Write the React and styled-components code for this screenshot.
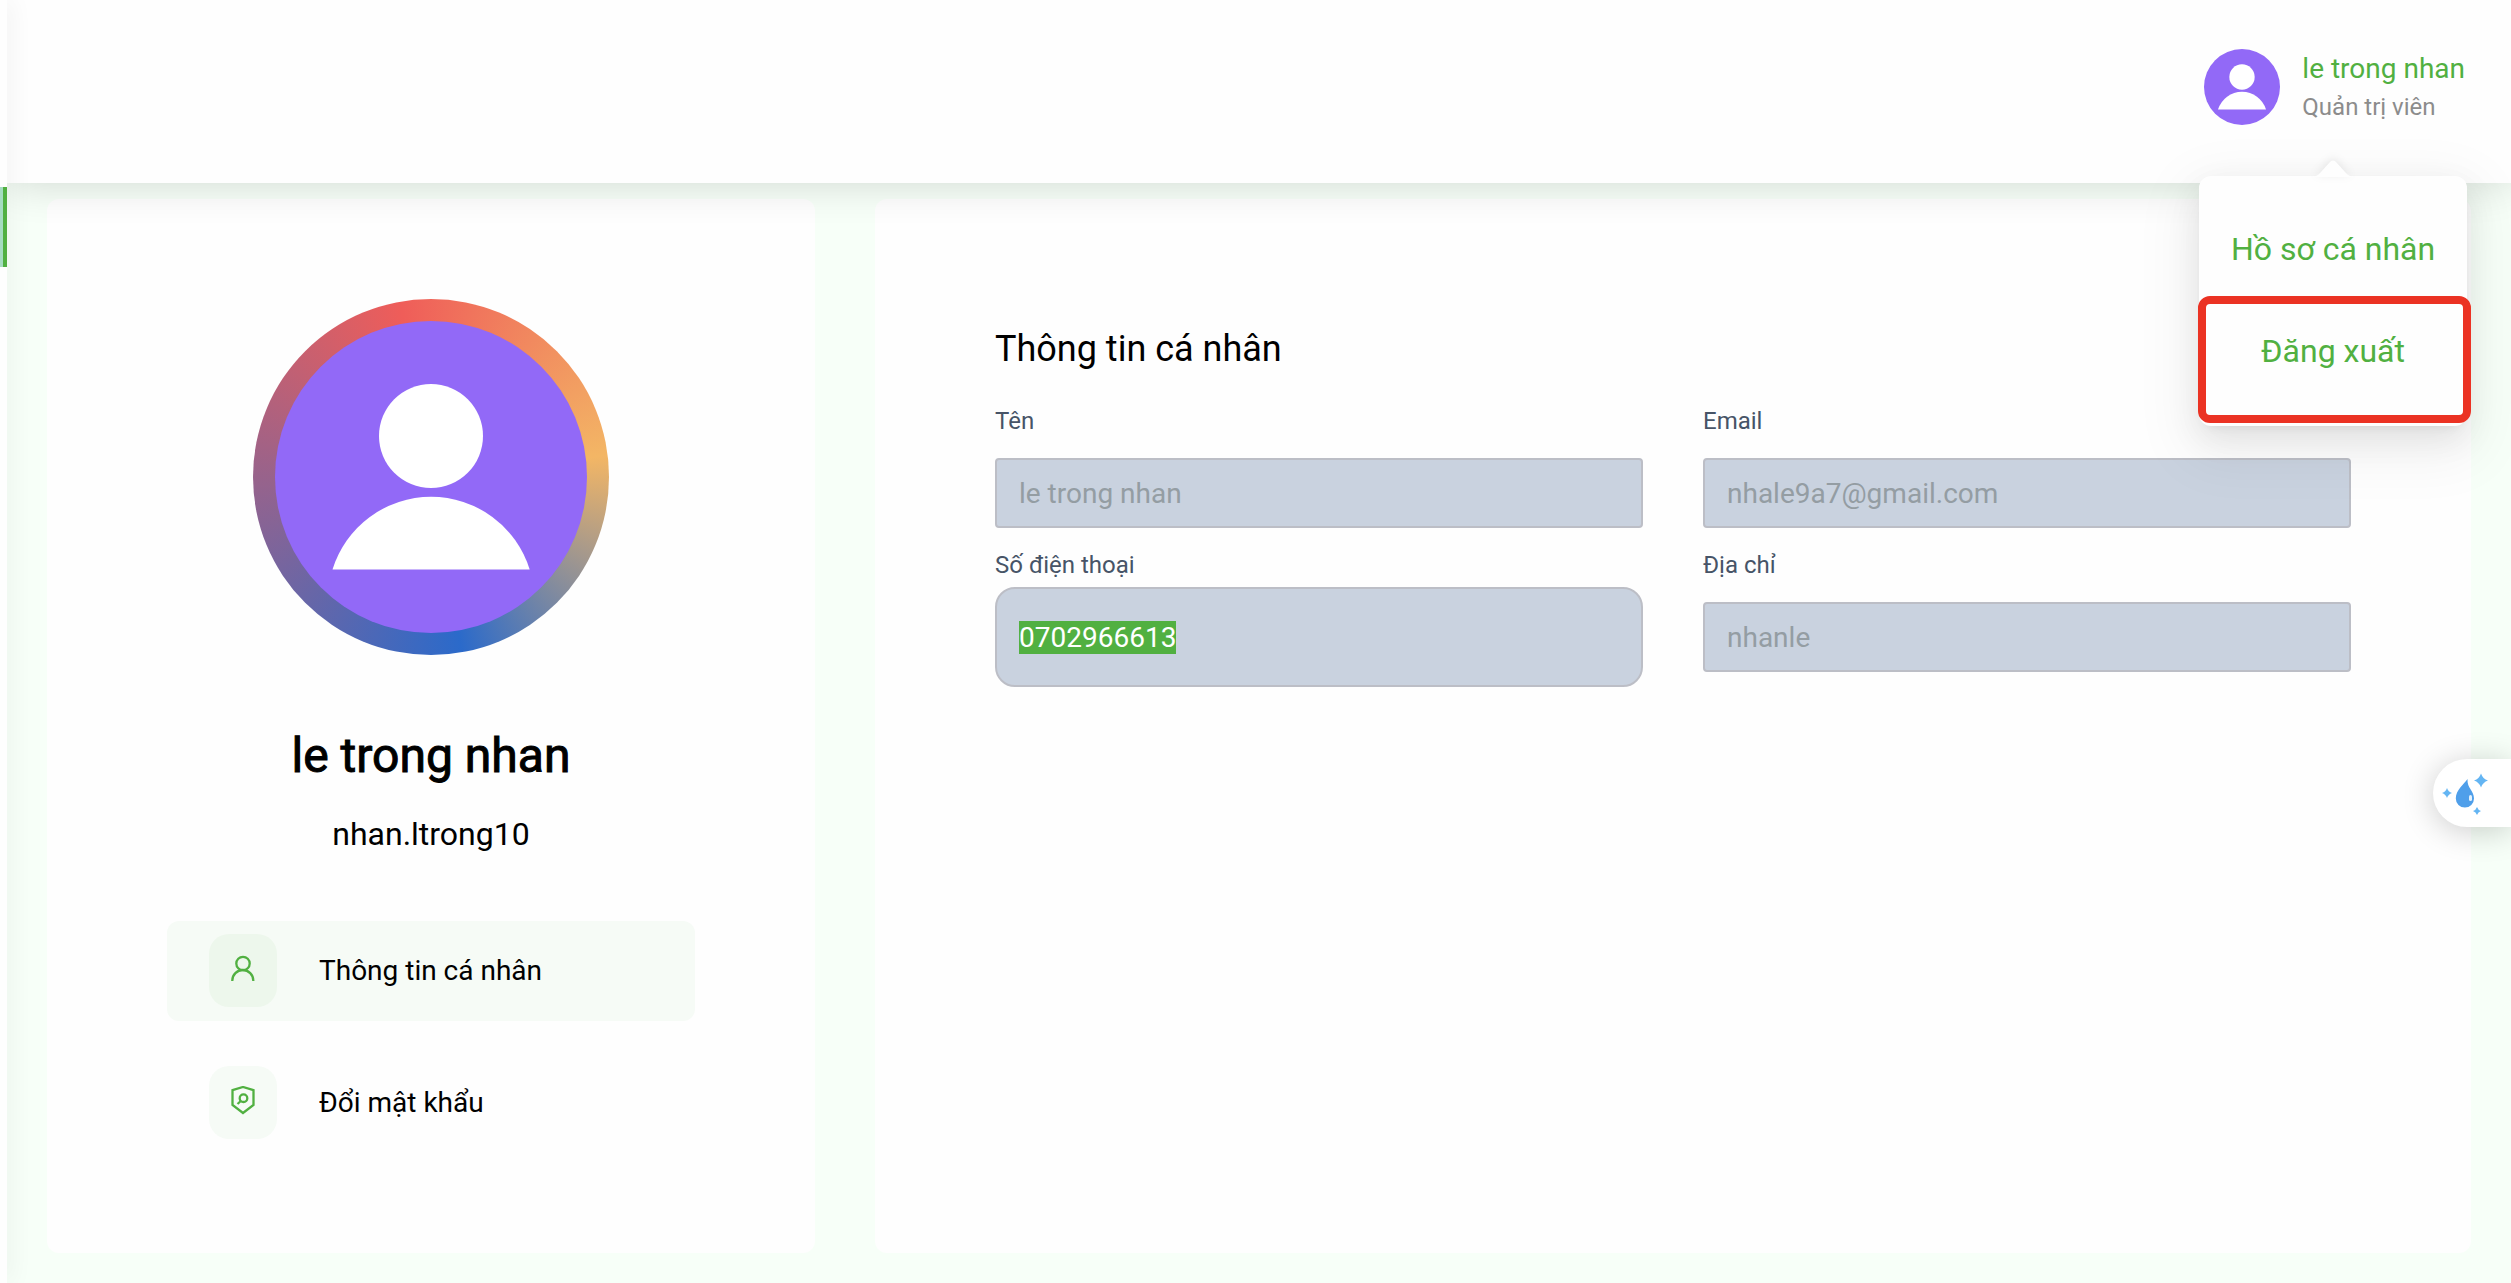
import React, { useEffect, useRef } from "react";
import styled, { createGlobalStyle, css } from "styled-components";

const GlobalStyle = createGlobalStyle`
  *, *::before, *::after { box-sizing: border-box; }
  body {
    margin: 0;
    background: #f7fff8;
    color: #000;
    font-family: Roboto, "Noto Sans", sans-serif;
    font-size: 28px;
  }
  h1, h2, p, ul { margin: 0; padding: 0; font-weight: 400; }
  ul { list-style: none; }
`;

const Shell = styled.div`
  display: grid;
  grid-template-columns: 7px 1fr;
  min-height: 100vh;
  overflow: hidden;
`;

const Rail = styled.nav`
  position: relative;
  z-index: 3;
  padding-top: 187px;
  background: #fefefe;
  box-shadow: 0 0 24px rgba(0, 0, 0, 0.12);
`;

const RailMarker = styled.a`
  display: block;
  height: 80px;
  background: #a5dcc0;
  border-right: 4px solid #51b041;
`;

const Page = styled.div`
  display: flex;
  flex-direction: column;
  min-width: 0;
`;

const Header = styled.header`
  position: relative;
  z-index: 2;
  display: flex;
  justify-content: flex-end;
  height: 183px;
  padding: 49px 46px 0 0;
  background: #fefefe;
  box-shadow: 0 0 40px rgba(0, 0, 0, 0.16);
`;

const Account = styled.div`
  position: relative;
  display: flex;
  align-items: flex-start;
  gap: 22px;
  height: 76px;
`;

const AvatarSvg = styled.svg`
  display: block;
  flex: none;
  width: ${(p) => p.$size}px;
  height: ${(p) => p.$size}px;
  border-radius: 50%;
`;

const AccountName = styled.p`
  font-size: 28px;
  line-height: 40px;
  color: #51b041;
`;

const AccountRole = styled.p`
  font-size: 24px;
  line-height: 36px;
  color: #8c8c8c;
`;

const Menu = styled.ul`
  position: absolute;
  top: 127px;
  right: -2px;
  width: 268px;
  height: 250px;
  padding-top: 22px;
  border-radius: 12px;
  background: #fefefe;
  box-shadow: 0 12px 32px rgba(0, 0, 0, 0.08), 0 6px 12px -8px rgba(0, 0, 0, 0.12),
    0 18px 56px 16px rgba(0, 0, 0, 0.05);
`;

const MenuArrow = styled.svg`
  position: absolute;
  top: -16px;
  left: 114px;
  width: 40px;
  height: 17px;
  filter: drop-shadow(0 -2px 4px rgba(0, 0, 0, 0.08));
`;

const MenuItem = styled.li`
  height: 102px;
`;

const MenuButton = styled.button`
  width: 100%;
  height: 100%;
  border: 0;
  padding: 0;
  background: none;
  font: inherit;
  font-size: 32px;
  color: #51b041;
`;

const Highlight = styled.li`
  position: absolute;
  top: 120px;
  left: -1px;
  right: -4px;
  height: 127px;
  border: 8px solid #eb3223;
  border-radius: 12px;
  pointer-events: none;
`;

const Content = styled.main`
  flex: 1;
  display: grid;
  grid-template-columns: repeat(3, minmax(0, 1fr));
  gap: 60px;
  padding: 16px 40px 30px;
`;

const Card = styled.section`
  background: #fefefe;
  border-radius: 12px;
`;

const ProfileCard = styled(Card)`
  display: flex;
  flex-direction: column;
  align-items: center;
  padding: 100px 120px 40px;
`;

const InfoCard = styled(Card)`
  grid-column: span 2;
  padding: 120px;
`;

const Ring = styled.div`
  padding: 22px;
  border-radius: 50%;
  background: conic-gradient(from -10deg, #ef5d59, #f3b665 93deg, #2b6aca 180deg, #ef5d59);
`;

const FullName = styled.h1`
  margin-top: 71px;
  font-size: 48px;
  line-height: 60px;
  -webkit-text-stroke: 1px currentColor;
`;

const UserName = styled.p`
  margin-top: 28px;
  font-size: 32px;
  line-height: 40px;
`;

const Tabs = styled.div`
  align-self: stretch;
  display: flex;
  flex-direction: column;
  gap: 32px;
  margin-top: 67px;
`;

const Tab = styled.button`
  display: flex;
  align-items: center;
  gap: 42px;
  height: 100px;
  padding: 0 42px 2px;
  border: 0;
  border-radius: 12px;
  background: ${(p) => (p.$active ? "#f6fbf6" : "transparent")};
  color: #000;
  font: inherit;
  font-size: 28px;
  text-align: left;
`;

const TabIcon = styled.span`
  display: flex;
  justify-content: center;
  width: 68px;
  height: 73px;
  padding-top: 20px;
  border-radius: 20px;
  background: ${(p) => (p.$active ? "#edf7ec" : "#f6fbf6")};
`;

const Title = styled.h2`
  font-size: 36px;
  line-height: 60px;
  margin-bottom: 20px;
`;

const Form = styled.form`
  display: grid;
  grid-template-columns: repeat(2, minmax(0, 1fr));
  column-gap: 60px;
`;

const FieldRow = styled.div`
  display: grid;
  grid-template-rows: 44px 100px;
  align-items: center;
`;

const Label = styled.label`
  font-size: 24px;
  color: #475467;
`;

const Input = styled.input`
  width: 100%;
  height: 70px;
  padding: 0 22px;
  border: 2px solid #bcbec6;
  border-radius: 4px;
  outline: 0;
  background: #c9d2df;
  color: #949da3;
  font: inherit;
  font-size: 28px;
  caret-color: transparent;
  ${(p) =>
    p.$tall &&
    css`
      height: 100px;
      border-radius: 20px;
    `}
  &::selection {
    background: #51b041;
    color: #fff;
  }
`;

const Helper = styled.button`
  position: fixed;
  z-index: 4;
  top: 759px;
  right: 0;
  width: 78px;
  height: 68px;
  padding: 0;
  border: 0;
  border-radius: 34px 0 0 34px;
  background: #fff;
  box-shadow: 0 4px 32px rgba(0, 0, 0, 0.2);
`;

function Avatar({ size }) {
  return (
    <AvatarSvg $size={size} viewBox="0 0 312 312" role="img" aria-label="le trong nhan">
      <rect width="312" height="312" fill="#9269f7" />
      <circle cx="156" cy="115" r="52" fill="#fff" />
      <path d="M57.500 248.500a103.200 103.200 0 0 1 197.200 0z" fill="#fff" />
    </AvatarSvg>
  );
}

function UserIcon() {
  return (
    <svg width="28" height="30" viewBox="0 0 28 30" fill="none" stroke="#51b041" strokeWidth="2.300">
      <circle cx="14" cy="9.500" r="6.700" />
      <path d="M3.300 27v-.5a10.500 10.500 0 0 1 21 0v.5" />
    </svg>
  );
}

function ShieldIcon() {
  return (
    <svg width="28" height="30" viewBox="0 1 28 30" fill="none" stroke="#51b041" strokeWidth="2.300">
      <path d="M14 2l10.500 3.200v14.800l-10.500 8l-10.500-8v-14.800z" />
      <circle cx="14.500" cy="13.200" r="3.800" />
      <path d="M11.800 16l-3.300 3" />
    </svg>
  );
}

function Spark({ x, y, r }) {
  const k = r * 0.25;
  return (
    <path
      fill="#64b5f3"
      d={`M${x} ${y - r}Q${x + k} ${y - k} ${x + r} ${y}Q${x + k} ${y + k} ${x} ${y + r}Q${x - k} ${y + k} ${x - r} ${y}Q${x - k} ${y - k} ${x} ${y - r}z`}
    />
  );
}

function Field({ id, label, value, disabled, inputRef, tall, type = "text" }) {
  return (
    <FieldRow>
      <Label htmlFor={id}>{label}</Label>
      <Input id={id} type={type} defaultValue={value} disabled={disabled} readOnly ref={inputRef} $tall={tall} />
    </FieldRow>
  );
}

export default function App() {
  const phone = useRef(null);

  useEffect(() => {
    phone.current.focus();
    phone.current.select();
  }, []);

  return (
    <>
      <GlobalStyle />
      <Shell>
        <Rail>
          <RailMarker href="#" aria-label="Menu" />
        </Rail>
        <Page>
          <Header>
            <Account>
              <Avatar size={76} />
              <div>
                <AccountName>le trong nhan</AccountName>
                <AccountRole>Quản trị viên</AccountRole>
              </div>
              <Menu>
                <MenuItem>
                  <MenuArrow viewBox="0 0 40 17" aria-hidden="true">
                    <path d="M0 17Q5 16 8 12L17 2Q20-1 23 2L32 12Q35 16 40 17z" fill="#fefefe" />
                  </MenuArrow>
                  <MenuButton type="button">Hồ sơ cá nhân</MenuButton>
                </MenuItem>
                <MenuItem>
                  <MenuButton type="button">Đăng xuất</MenuButton>
                </MenuItem>
                <Highlight aria-hidden="true" />
              </Menu>
            </Account>
          </Header>
          <Content>
            <ProfileCard>
              <Ring>
                <Avatar size={312} />
              </Ring>
              <FullName>le trong nhan</FullName>
              <UserName>nhan.ltrong10</UserName>
              <Tabs>
                <Tab type="button" $active>
                  <TabIcon $active>
                    <UserIcon />
                  </TabIcon>
                  Thông tin cá nhân
                </Tab>
                <Tab type="button">
                  <TabIcon>
                    <ShieldIcon />
                  </TabIcon>
                  Đổi mật khẩu
                </Tab>
              </Tabs>
            </ProfileCard>
            <InfoCard>
              <Title>Thông tin cá nhân</Title>
              <Form>
                <Field id="name" label="Tên" value="le trong nhan" disabled />
                <Field id="email" type="email" label="Email" value="nhale9a7@gmail.com" disabled />
                <Field id="phone" label="Số điện thoại" value="0702966613" inputRef={phone} tall />
                <Field id="address" label="Địa chỉ" value="nhanle" disabled />
              </Form>
            </InfoCard>
          </Content>
        </Page>
        <Helper type="button" aria-label="Assistant">
          <svg width="78" height="68" viewBox="0 0 78 68">
            <path d="M34.500 20c-3.500 5-11.700 11-11.700 19.500a9.100 9.100 0 0 0 18.200 0c0-8-7-10-6.500-19.500z" fill="#4f9fea" />
            <rect x="36" y="36" width="3" height="6" rx="1.500" fill="#e4f2fd" />
            <Spark x={48} y={21.5} r={7} />
            <Spark x={14} y={34} r={5} />
            <Spark x={44} y={52} r={4} />
          </svg>
        </Helper>
      </Shell>
    </>
  );
}
